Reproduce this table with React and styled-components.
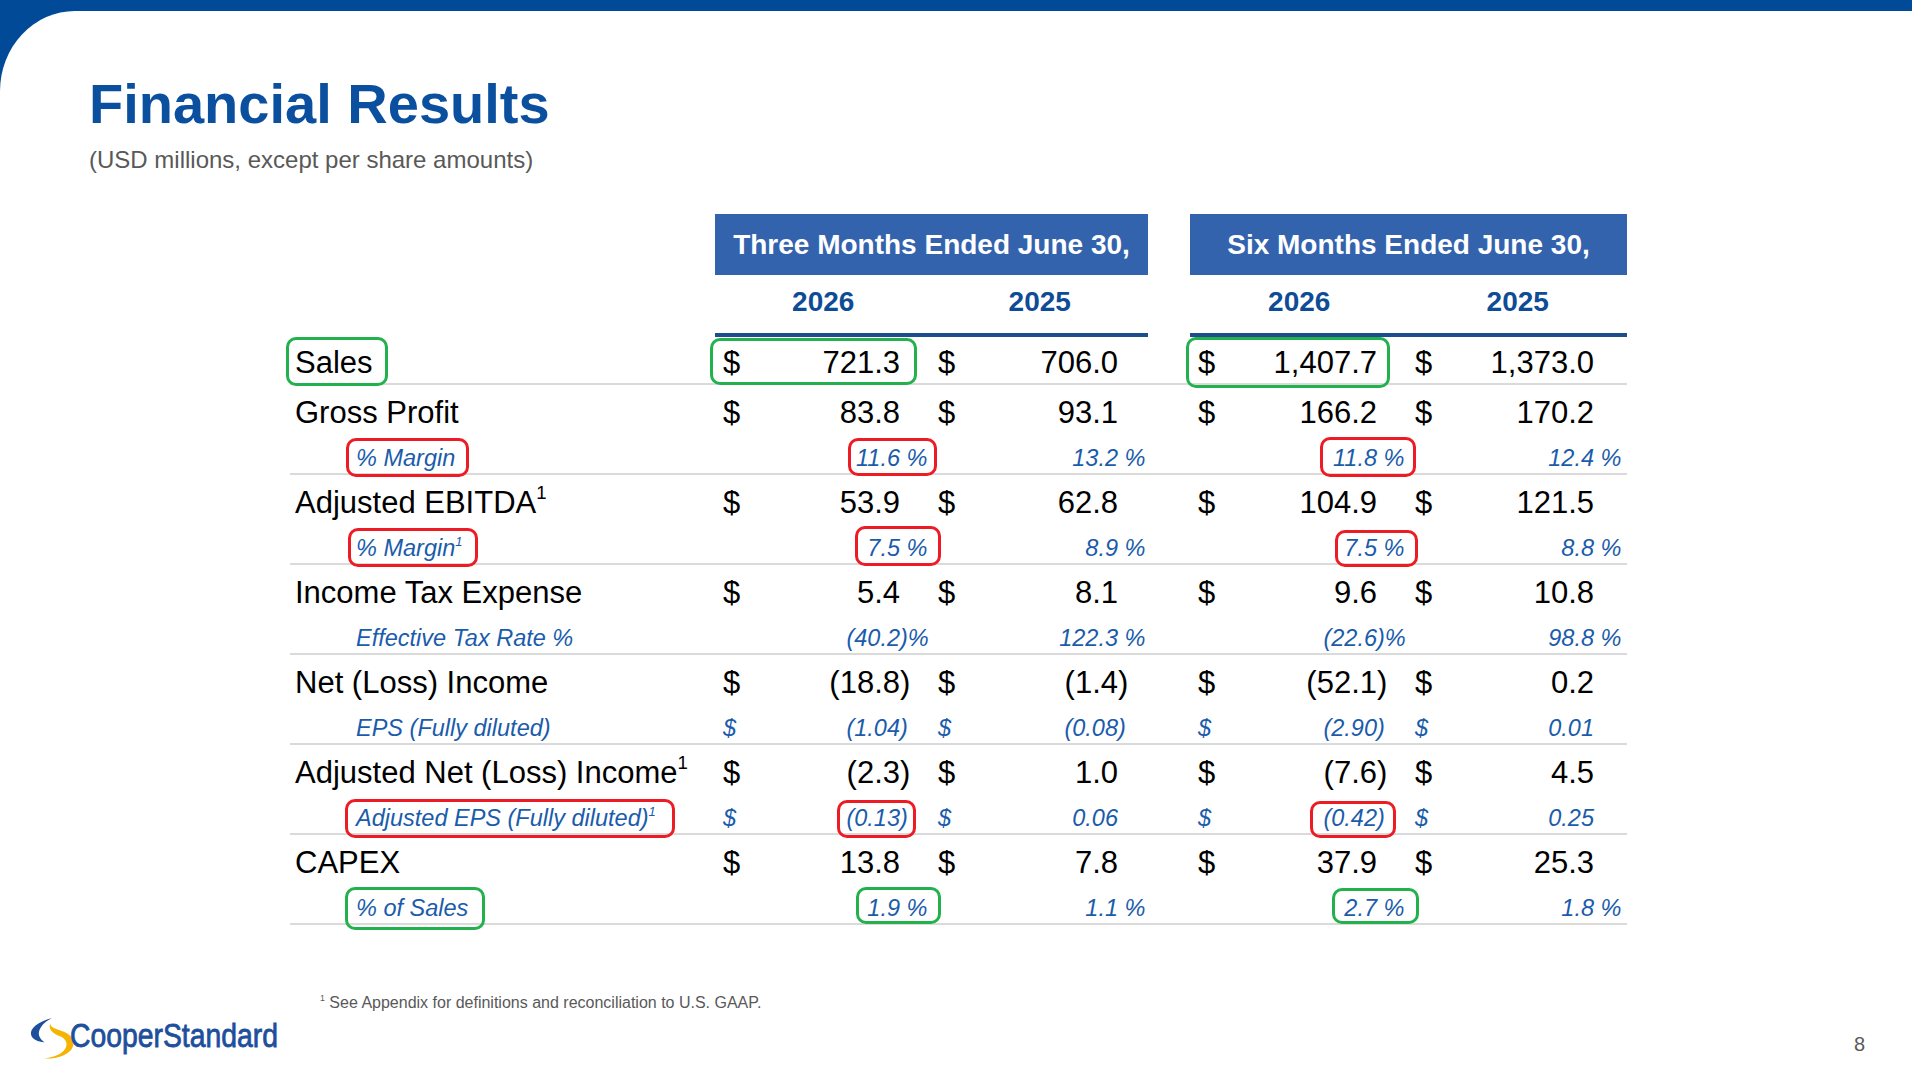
import React from 'react';
import styled, { createGlobalStyle } from 'styled-components';

const COLS = '425px 215px 218px 42px 217px 217px 3px';
const FONT = '"Liberation Sans", Arial, sans-serif';

const rows = [
  { label: 'Sales', vals: ['721.3', '706.0', '1,407.7', '1,373.0'] },
  {
    label: 'Gross Profit',
    vals: ['83.8', '93.1', '166.2', '170.2'],
    sub: { label: '% Margin', vals: ['11.6 %', '13.2 %', '11.8 %', '12.4 %'] },
  },
  {
    label: 'Adjusted EBITDA',
    sup: true,
    vals: ['53.9', '62.8', '104.9', '121.5'],
    sub: { label: '% Margin', sup: true, vals: ['7.5 %', '8.9 %', '7.5 %', '8.8 %'] },
  },
  {
    label: 'Income Tax Expense',
    vals: ['5.4', '8.1', '9.6', '10.8'],
    sub: { label: 'Effective Tax Rate %', vals: ['(40.2)%', '122.3 %', '(22.6)%', '98.8 %'] },
  },
  {
    label: 'Net (Loss) Income',
    vals: ['(18.8)', '(1.4)', '(52.1)', '0.2'],
    sub: { label: 'EPS (Fully diluted)', dollar: true, vals: ['(1.04)', '(0.08)', '(2.90)', '0.01'] },
  },
  {
    label: 'Adjusted Net (Loss) Income',
    sup: true,
    vals: ['(2.3)', '1.0', '(7.6)', '4.5'],
    sub: {
      label: 'Adjusted EPS (Fully diluted)',
      sup: true,
      dollar: true,
      vals: ['(0.13)', '0.06', '(0.42)', '0.25'],
    },
  },
  {
    label: 'CAPEX',
    vals: ['13.8', '7.8', '37.9', '25.3'],
    sub: { label: '% of Sales', vals: ['1.9 %', '1.1 %', '2.7 %', '1.8 %'] },
  },
];

// annotation boxes drawn over the table (x, y, w, h relative to the table)
const marks = [
  { tone: 'green', x: -4, y: 123, w: 102, h: 49 },
  { tone: 'green', x: 420, y: 124, w: 207, h: 47 },
  { tone: 'green', x: 896, y: 123, w: 204, h: 51 },
  { tone: 'green', x: 55, y: 673, w: 140, h: 43 },
  { tone: 'green', x: 566, y: 673, w: 85, h: 37 },
  { tone: 'green', x: 1042, y: 674, w: 87, h: 36 },
  { tone: 'red', x: 56, y: 224, w: 123, h: 39 },
  { tone: 'red', x: 558, y: 224, w: 89, h: 38 },
  { tone: 'red', x: 1030, y: 223, w: 96, h: 40 },
  { tone: 'red', x: 58, y: 314, w: 130, h: 39 },
  { tone: 'red', x: 565, y: 312, w: 86, h: 40 },
  { tone: 'red', x: 1045, y: 316, w: 83, h: 37 },
  { tone: 'red', x: 55, y: 585, w: 330, h: 39 },
  { tone: 'red', x: 547, y: 586, w: 79, h: 38 },
  { tone: 'red', x: 1020, y: 587, w: 86, h: 37 },
];

const splitValue = (v) => {
  const m = v.match(/^(\(?[\d.,]+)(.*)$/);
  return m ? [m[1], m[2]] : [v, ''];
};

const GlobalStyle = createGlobalStyle`
  body {
    margin: 0;
    background: #fff;
  }
`;

const Slide = styled.div`
  width: 1912px;
  height: 1075px;
  overflow: hidden;
  background: linear-gradient(#004a98 0 120px, #fff 120px);
  font-family: ${FONT};
`;

const Panel = styled.div`
  margin-top: 11px;
  height: 1064px;
  background: #fff;
  border-top-left-radius: 75px 80px;
  display: flex;
  flex-direction: column;
`;

const Heading = styled.header`
  padding: 61px 0 0 89px;
`;

const Title = styled.h1`
  margin: 0;
  font-size: 56px;
  line-height: 64px;
  font-weight: 700;
  color: #0b4f9f;
`;

const Subtitle = styled.p`
  margin: 10px 0 0;
  font-size: 24px;
  line-height: 28px;
  color: #595959;
`;

const Table = styled.section`
  position: relative;
  margin: 40px 0 0 290px;
  width: 1337px;
`;

const HeadRow = styled.div`
  display: grid;
  grid-template-columns: ${COLS};
`;

const PeriodBox = styled.div`
  grid-column: ${(p) => p.$span};
  height: 61px;
  background: #3463ae;
  color: #fff;
  font-size: 28px;
  line-height: 61px;
  font-weight: 700;
  text-align: center;
  white-space: nowrap;
`;

const YearPair = styled.div`
  grid-column: ${(p) => p.$span};
  display: grid;
  grid-template-columns: 1fr 1fr;
  padding-bottom: 4px;
  border-bottom: 4px solid #1e4d8b;
`;

const Year = styled.div`
  font-size: 28px;
  line-height: 54px;
  font-weight: 700;
  color: #0f4c96;
  text-align: center;
`;

const Group = styled.div`
  border-bottom: 2px solid #dadada;
`;

const Line = styled.div`
  display: grid;
  grid-template-columns: ${COLS};
  white-space: nowrap;
  ${(p) =>
    p.$kind === 'sub'
      ? `
    padding-top: 6px;
    font-size: 23.5px;
    line-height: 30px;
    font-style: italic;
    color: #1a5cab;
  `
      : `
    padding-top: ${p.$kind === 'sales' ? 6 : 4}px;
    font-size: 31px;
    line-height: ${p.$kind === 'sales' ? 40 : 48}px;
    color: #000;
  `}
`;

const Label = styled.div`
  padding-left: ${(p) => (p.$sub ? 66 : 5)}px;
`;

const Cell = styled.div`
  display: flex;
  padding-left: 8px;
`;

const Num = styled.span`
  flex: 1;
  text-align: right;
`;

const Suffix = styled.span`
  width: 30px;
  white-space: pre;
`;

const Sup = styled.sup`
  font-size: ${(p) => (p.$small ? 0.55 : 0.6)}em;
  line-height: 0;
  vertical-align: 0.75em;
`;

const Mark = styled.div`
  position: absolute;
  left: ${(p) => p.$x}px;
  top: ${(p) => p.$y}px;
  width: ${(p) => p.$w}px;
  height: ${(p) => p.$h}px;
  box-sizing: border-box;
  border: 3.5px solid ${(p) => (p.$tone === 'red' ? '#ed1c24' : '#22b14c')};
  border-radius: 10px;
  pointer-events: none;
`;

const Footer = styled.footer`
  display: flex;
  align-items: flex-start;
  margin-top: 65px;
  padding-left: 28px;
`;

const LogoMark = styled.svg`
  flex: none;
  margin-top: 24px;
  overflow: visible;
`;

const Footnote = styled.p`
  margin: 3px 0 0 40px;
  font-size: 16px;
  line-height: 20px;
  color: #595959;
`;

const PageNum = styled.div`
  margin: 42px 47px 0 auto;
  font-size: 20px;
  line-height: 24px;
  color: #595959;
`;

const Logo = () => (
  <LogoMark width="252" height="48" viewBox="0 0 252 48">
    <path
      d="M24 4 C10 8, 2 14, 3 20.5 C4 25.5, 10 27.8, 16.5 28.2 C12 25, 9.5 21, 11.5 16 C13.5 11, 18 7, 24 4 Z"
      fill="#1d4f9c"
    />
    <path
      d="M22.7 9 C19.5 15, 24.5 19.5, 31.5 22 C39.5 25, 40.5 32, 35.5 37 C31 41.5, 24 43.5, 16.5 44.5 C28 45.5, 45.5 40.5, 45.5 29 C45.5 22, 38.5 18.5, 31 16 C25 14, 21.8 12.3, 22.7 9 Z"
      fill="#f5b400"
    />
    <text
      x="42"
      y="32.7"
      fontFamily={FONT}
      fontSize="33"
      fill="#1d4f9c"
      stroke="#1d4f9c"
      strokeWidth="0.8"
      textLength="208"
      lengthAdjust="spacingAndGlyphs"
    >
      CooperStandard
    </text>
  </LogoMark>
);

const Values = ({ vals, dollar }) =>
  vals.map((v, i) => {
    const [num, suffix] = splitValue(v);
    return (
      <React.Fragment key={i}>
        {i === 2 && <span />}
        <Cell>
          <span>{dollar ? '$' : ''}</span>
          <Num>{num}</Num>
          <Suffix>{suffix}</Suffix>
        </Cell>
      </React.Fragment>
    );
  });

const App = () => (
  <Slide>
    <GlobalStyle />
    <Panel>
      <Heading>
        <Title>Financial Results</Title>
        <Subtitle>(USD millions, except per share amounts)</Subtitle>
      </Heading>

      <Table>
        <HeadRow>
          <PeriodBox $span="2 / 4">Three Months Ended June 30,</PeriodBox>
          <PeriodBox $span="5 / 8">Six Months Ended June 30,</PeriodBox>
        </HeadRow>
        <HeadRow>
          <YearPair $span="2 / 4">
            <Year>2026</Year>
            <Year>2025</Year>
          </YearPair>
          <YearPair $span="5 / 8">
            <Year>2026</Year>
            <Year>2025</Year>
          </YearPair>
        </HeadRow>

        {rows.map((row) => (
          <Group key={row.label}>
            <Line $kind={row.sub ? 'main' : 'sales'}>
              <Label>
                {row.label}
                {row.sup && <Sup>1</Sup>}
              </Label>
              <Values vals={row.vals} dollar />
            </Line>
            {row.sub && (
              <Line $kind="sub">
                <Label $sub>
                  {row.sub.label}
                  {row.sub.sup && <Sup $small>1</Sup>}
                </Label>
                <Values vals={row.sub.vals} dollar={row.sub.dollar} />
              </Line>
            )}
          </Group>
        ))}

        {marks.map((m, i) => (
          <Mark key={i} $tone={m.tone} $x={m.x} $y={m.y} $w={m.w} $h={m.h} />
        ))}
      </Table>

      <Footer>
        <Logo />
        <Footnote>
          <Sup $small>1</Sup> See Appendix for definitions and reconciliation to U.S. GAAP.
        </Footnote>
        <PageNum>8</PageNum>
      </Footer>
    </Panel>
  </Slide>
);

export default App;
